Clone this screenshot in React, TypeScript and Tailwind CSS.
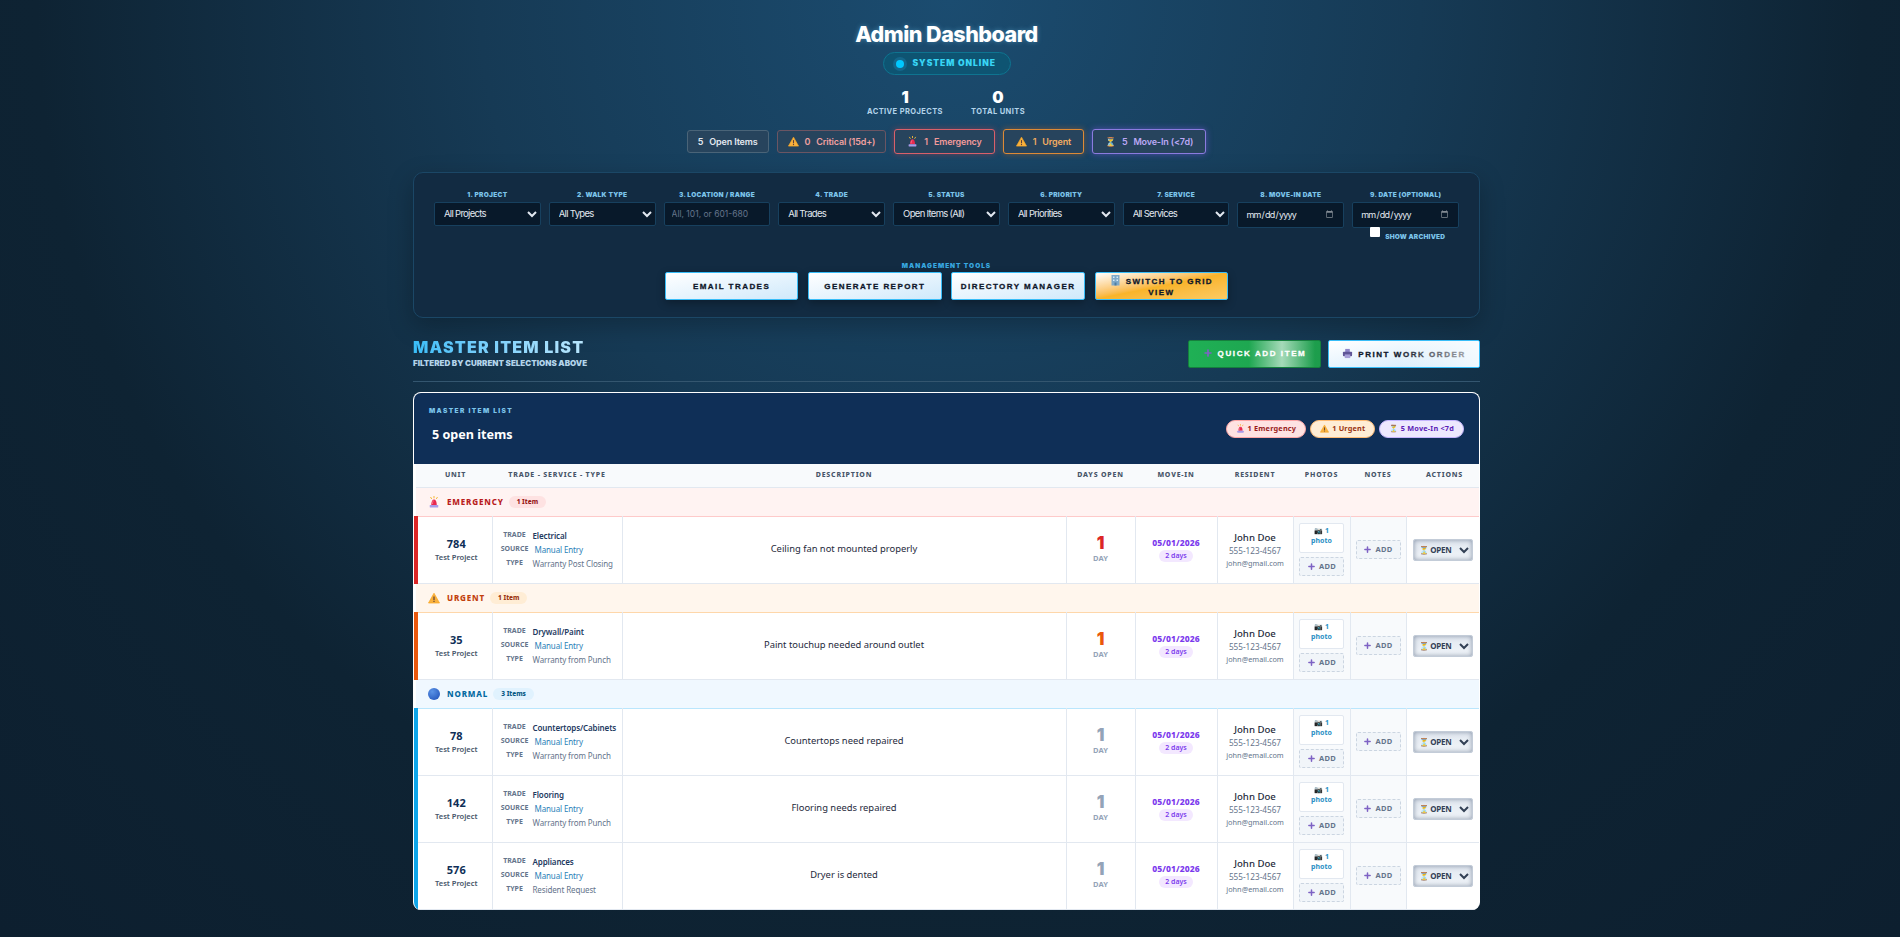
import React from 'react';
import { Plus } from 'lucide-react';

function Siren({ size = 12 }: { size?: number }) {
  return (
    <svg width={size} height={size} viewBox="0 0 24 24" className="inline-block shrink-0 align-[-2px]">
      <path d="M5 2l2.5 4M12 0v4.5M19 2l-2.5 4" stroke="#f5b73a" strokeWidth="2" fill="none" />
      <path d="M6.5 18c0-7 2-11 5.5-11s5.500 4 5.500 11z" fill="#e8294f" />
      <path d="M9 16c0-4 1-6 2.500-7" stroke="#f88aa0" strokeWidth="1.500" fill="none" />
      <rect x="3.500" y="18" width="17" height="5" rx="1" fill="#a89be8" />
    </svg>
  );
}

function Warn({ size = 12 }: { size?: number }) {
  return (
    <svg width={size} height={size} viewBox="0 0 24 24" className="inline-block shrink-0 align-[-2px]">
      <path d="M12 2.500L23 22H1z" fill="#f9b13e" stroke="#f9a825" strokeWidth="1.500" strokeLinejoin="round" />
      <rect x="10.800" y="9" width="2.400" height="7" fill="#5d4037" />
      <rect x="10.800" y="17.500" width="2.400" height="2.400" fill="#5d4037" />
    </svg>
  );
}

function Ball({ size = 12 }: { size?: number }) {
  return <span style={{ width: size, height: size }} className="inline-block shrink-0 rounded-full bg-[radial-gradient(circle_at_35%_30%,#5b93e6,#2f62c4_70%,#2450a8)]" />;
}

function Printer() {
  return (
    <svg width="11" height="11" viewBox="0 0 24 24" className="mr-[5px] inline-block align-[-2px]">
      <rect x="7" y="2" width="10" height="7" fill="#8f86c9" />
      <rect x="2" y="8" width="20" height="10" rx="2" fill="#5f5596" />
      <rect x="6" y="14" width="12" height="8" fill="#a79fd8" />
    </svg>
  );
}

function Building() {
  return (
    <svg width="11" height="12" viewBox="0 0 22 24" className="mr-[5px] inline-block align-[-2px]">
      <rect x="3" y="2" width="16" height="21" fill="#7fa9c9" />
      <rect x="6" y="5" width="3" height="3" fill="#d8ecf8" />
      <rect x="13" y="5" width="3" height="3" fill="#d8ecf8" />
      <rect x="6" y="11" width="3" height="3" fill="#d8ecf8" />
      <rect x="13" y="11" width="3" height="3" fill="#d8ecf8" />
      <rect x="9" y="17" width="4" height="6" fill="#4f7ea3" />
    </svg>
  );
}

const FILTERS = [
  { label: '1. PROJECT', value: 'All Projects' },
  { label: '2. WALK TYPE', value: 'All Types' },
  { label: '3. LOCATION / RANGE', input: 'All, 101, or 601-680' },
  { label: '4. TRADE', value: 'All Trades' },
  { label: '5. STATUS', value: 'Open Items (All)' },
  { label: '6. PRIORITY', value: 'All Priorities' },
  { label: '7. SERVICE', value: 'All Services' },
  { label: '8. MOVE-IN DATE', date: true },
  { label: '9. DATE (OPTIONAL)', date: true, archived: true },
];

const GROUPS = [
  {
    name: 'EMERGENCY',
    icon: <Siren />,
    count: '1 Item',
    bar: 'border-l-[#dc2626]',
    days: 'text-[#dc2626]',
    head: 'bg-[#fff3f2] border-b-[#fecaca]',
    title: 'text-[#b91c1c]',
    pill: 'bg-[#fee2e2] text-[#991b1b]',
    rows: [{ unit: '784', trade: 'Electrical', type: 'Warranty Post Closing', desc: 'Ceiling fan not mounted properly', mail: 'john@gmail.com' }],
  },
  {
    name: 'URGENT',
    icon: <Warn />,
    count: '1 Item',
    bar: 'border-l-[#ea580c]',
    days: 'text-[#ea580c]',
    head: 'bg-[#fff6ed] border-b-[#fed7aa]',
    title: 'text-[#c2410c]',
    pill: 'bg-[#ffedd5] text-[#9a3412]',
    rows: [{ unit: '35', trade: 'Drywall/Paint', type: 'Warranty from Punch', desc: 'Paint touchup needed around outlet', mail: 'john@email.com' }],
  },
  {
    name: 'NORMAL',
    icon: <Ball />,
    count: '3 Items',
    bar: 'border-l-[#0ea5e9]',
    days: 'text-[#94a3b8]',
    head: 'bg-[#f0f8ff] border-b-[#bae6fd]',
    title: 'text-[#0369a1]',
    pill: 'bg-[#e0f2fe] text-[#075985]',
    rows: [
      { unit: '78', trade: 'Countertops/Cabinets', type: 'Warranty from Punch', desc: 'Countertops need repaired', mail: 'john@email.com' },
      { unit: '142', trade: 'Flooring', type: 'Warranty from Punch', desc: 'Flooring needs repaired', mail: 'john@gmail.com' },
      { unit: '576', trade: 'Appliances', type: 'Resident Request', desc: 'Dryer is dented', mail: 'john@email.com' },
    ],
  },
];

const HEADERS = ['UNIT', 'TRADE - SERVICE - TYPE', 'DESCRIPTION', 'DAYS OPEN', 'MOVE-IN', 'RESIDENT', 'PHOTOS', 'NOTES', 'ACTIONS'];
const WIDTHS = ['w-[76px]', 'w-[130px]', 'w-[444px]', 'w-[69px]', 'w-[82px]', 'w-[76px]', 'w-[57px]', 'w-[56px]', 'w-[77px]'];

const sans = "font-['Inter',sans-serif]";
const body = "font-['Noto_Sans','Open_Sans',sans-serif]";
const toolBtn =
  "h-[28px] w-[133.4px] rounded-[2px] border border-[#38bdf8] bg-gradient-to-br from-white to-[#cfe9fb] font-['Liberation_Sans',sans-serif] text-[8px] leading-[11px] font-bold tracking-[1.45px] text-[#0f172a] shadow-[0_3px_8px_rgba(0,0,0,0.3)] [-webkit-text-stroke:0.3px_#0f172a]";

function Badge({ className, children }: { className: string; children: React.ReactNode }) {
  return (
    <div className={`flex items-center gap-[6px] rounded-[3px] border bg-[#27445d] text-[9px] font-semibold tracking-[-0.15px] ${className}`}>
      {children}
    </div>
  );
}

function Filter({ f }: { f: (typeof FILTERS)[number] }) {
  const field = 'w-full rounded-[2px] border border-[#17405e] bg-[#08192a] text-[#e2e8f0]';
  return (
    <div className="relative flex flex-col items-center">
      <label className="mb-[1.5px] text-[6.5px] leading-[9px] font-black tracking-[0.3px] text-[#7cc4ea]">{f.label}</label>
      {f.value && (
        <select className={`${field} h-[24px] pl-[5px] text-[9.5px] tracking-[-0.7px]`} defaultValue={f.value}>
          <option>{f.value}</option>
        </select>
      )}
      {f.input && <input className={`${field} h-[24px] px-[7px] text-[8.5px] placeholder:text-[#64748b]`} placeholder={f.input} />}
      {f.date && (
        <input
          type="date"
          className={`${field} h-[26px] px-[7px] text-[9px] tracking-[-0.8px] [color-scheme:dark] [&::-webkit-calendar-picker-indicator]:h-[9px] [&::-webkit-calendar-picker-indicator]:w-[9px] [&::-webkit-calendar-picker-indicator]:opacity-50`}
        />
      )}
      {f.archived && (
        <label className="absolute top-[35px] left-[18px] mt-[2px] flex items-center gap-[5px] text-[6.5px] font-black tracking-[0.2px] text-[#7cc4ea]">
          <input type="checkbox" className="mt-[-6px] h-[10px] w-[10px] appearance-none rounded-[1px] bg-white" />
          <span className="mt-[5px]">SHOW ARCHIVED</span>
        </label>
      )}
    </div>
  );
}

function AddBtn({ className = '' }: { className?: string }) {
  return (
    <button className={`flex h-[19px] w-[45px] items-center justify-center gap-[3px] rounded-[2px] border border-dashed border-[#cbd5e1] bg-[#f1f5f9] text-[7.5px] font-bold tracking-[0.3px] text-[#64748b] ${className}`}>
      <Plus size={9} strokeWidth={4} className="text-[#7e62c4]" /> ADD
    </button>
  );
}

function Row({ r, g }: { r: (typeof GROUPS)[number]['rows'][number]; g: (typeof GROUPS)[number] }) {
  return (
    <tr className="h-[67px] border-b border-[#e2e8f0] bg-white">
      <td className={`border-r border-l-[4px] border-r-[#e2e8f0] pl-[3px] text-center ${g.bar}`}>
        <div className="text-[11px] leading-[14px] font-bold text-[#0f2f57]">{r.unit}</div>
        <div className="text-[7.5px] leading-[12px] font-semibold text-[#475569]">Test Project</div>
      </td>
      <td className="border-r border-[#e2e8f0] pl-[7px]">
        {[
          ['TRADE', r.trade, 'font-semibold text-[#1e3a5f]'],
          ['SOURCE', 'Manual Entry', 'ml-[5px] text-[#2a7fb8]'],
          ['TYPE', r.type, 'ml-[3px] text-[#64748b]'],
        ].map(([k, v, c]) => (
          <div key={k} className="flex h-[14px] items-center text-[8px] tracking-[-0.12px] whitespace-nowrap">
            <span className="w-[30px] text-center text-[7px] font-bold tracking-[0px] text-[#64748b]">{k}</span>
            <span className={`ml-[3px] ${c}`}>{v}</span>
          </div>
        ))}
      </td>
      <td className="border-r border-[#e2e8f0] text-center text-[9.4px] text-[#1e293b]">{r.desc}</td>
      <td className="border-r border-[#e2e8f0] text-center">
        <div className={`${sans} text-[17px] leading-[18px] font-black ${g.days}`}>1</div>
        <div className="mt-[1px] text-[7.5px] font-bold text-[#94a3b8]">DAY</div>
      </td>
      <td className="border-r border-[#e2e8f0] text-center">
        <div className="text-[8.5px] leading-[12px] font-extrabold tracking-[0.1px] text-[#7c3aed]">05/01/2026</div>
        <div className="mx-auto mt-[1.5px] w-fit rounded-full bg-[#f3e8ff] px-[6px] text-[7px] leading-[12px] font-semibold text-[#7c3aed]">2 days</div>
      </td>
      <td className="border-r border-[#e2e8f0] text-center">
        <div className="text-[9.6px] leading-[13px] font-medium text-[#1e293b]">John Doe</div>
        <div className="text-[8.2px] leading-[13px] text-[#64748b]">555-123-4567</div>
        <div className="text-[7.3px] leading-[12px] text-[#64748b]">{r.mail}</div>
      </td>
      <td className="border-r border-[#e2e8f0] bg-[#f8fafc] text-center">
        <div className="flex flex-col items-center gap-[4px]">
          <div className="h-[30px] w-[45px] rounded-[2px] border border-[#e2e8f0] bg-white pt-[2px] text-[7px] leading-[10px] font-bold text-[#2a8fc4]">
            📷 1<br />photo
          </div>
          <AddBtn />
        </div>
      </td>
      <td className="border-r border-[#e2e8f0] bg-[#f8fafc]">
        <AddBtn className="mx-auto" />
      </td>
      <td className="text-center">
        <select
          className="ml-[6px] block h-[22px] w-[60px] rounded-[2px] border border-[#c3ccd8] bg-gradient-to-b from-[#e2e8f0] to-[#f1f5f9] pl-[1px] text-[8px] font-bold tracking-[-0.2px] text-[#334155] shadow-[inset_0_0_5px_rgba(100,116,139,0.7)]"
          defaultValue="⏳ OPEN"
        >
          <option>⏳ OPEN</option>
        </select>
      </td>
    </tr>
  );
}

export default function App() {
  return (
    <div className={`${sans} min-h-[937px] bg-[radial-gradient(ellipse_at_top,#1b4c70_0%,#163a55_35%,#0e2333_68%,#0d1f2f_100%)] pr-[7px] pb-[28px]`}>
      <header className="flex flex-col items-center pt-[21px]">
        <h1 className="text-[21.5px] leading-[26px] font-extrabold tracking-[-0.5px] text-white [text-shadow:0_0_5px_rgba(125,211,252,0.4)]">Admin Dashboard</h1>
        <div className="mt-[5px] flex h-[23px] w-[128px] items-center gap-[6px] rounded-full border border-[#0e7490] bg-[#0e5472] pl-[9px] text-[8.5px] font-black tracking-[0.95px] text-[#38d5f5]">
          <span className="flex h-[14px] w-[14px] items-center justify-center rounded-full bg-[#14668a]">
            <span className="h-[8px] w-[8px] rounded-full bg-[#00c8ff]" />
          </span>
          SYSTEM ONLINE
        </div>
        <div className="mt-[12px] flex gap-[25px] text-center">
          <div className="w-[78px]">
            <div className="text-[16px] leading-[20px] font-black text-white">1</div>
            <div className="text-[7.5px] leading-[10px] font-bold tracking-[0.4px] whitespace-nowrap text-[#b3d4ea]">ACTIVE PROJECTS</div>
          </div>
          <div className="w-[58px]">
            <div className="text-[16px] leading-[20px] font-black text-white">0</div>
            <div className="text-[7.5px] leading-[10px] font-bold tracking-[0.4px] whitespace-nowrap text-[#b3d4ea]">TOTAL UNITS</div>
          </div>
        </div>
        <div className="mt-[12px] flex items-center gap-[8px]">
          <Badge className="h-[23px] border-[#4a6478] px-[10px] text-[#e2e8f0]">
            <span>5</span>
            <span>Open Items</span>
          </Badge>
          <Badge className="h-[23px] border-[#6b5563] px-[10px] text-[#f0a0a0]">
            <Warn size={11} />
            <span>0</span>
            <span>Critical (15d+)</span>
          </Badge>
          <Badge className="h-[25px] border-[#d9606a] px-[12px] text-[#f19a9a] shadow-[0_0_6px_rgba(239,68,68,0.4)]">
            <Siren size={11} />
            <span>1</span>
            <span>Emergency</span>
          </Badge>
          <Badge className="h-[25px] border-[#dd8a36] px-[12px] text-[#f2ad62] shadow-[0_0_6px_rgba(249,115,22,0.4)]">
            <Warn size={11} />
            <span>1</span>
            <span>Urgent</span>
          </Badge>
          <Badge className="h-[25px] border-[#8b7bdf] px-[12px] text-[#bba8f5] shadow-[0_0_6px_rgba(139,92,246,0.5)]">
            <span className="text-[9px]">⏳</span>
            <span>5</span>
            <span>Move-In (&lt;7d)</span>
          </Badge>
        </div>
      </header>

      <main className="mx-auto w-[1067px]">
        <section className="mt-[18px] h-[146px] rounded-[10px] border border-[#1b4766] bg-[#122b42] px-[20px] pt-[18px] shadow-[0_8px_24px_rgba(0,0,0,0.25)]">
          <div className="grid grid-cols-9 gap-[8px]">
            {FILTERS.map((f) => (
              <Filter key={f.label} f={f} />
            ))}
          </div>
          <div className="mt-[34.5px] text-center text-[6.5px] leading-[9px] font-black tracking-[1px] text-[#38a8e0]">MANAGEMENT TOOLS</div>
          <div className="mt-[1px] flex justify-center gap-[9.9px]">
            <button className={toolBtn}>EMAIL TRADES</button>
            <button className={toolBtn}>GENERATE REPORT</button>
            <button className={toolBtn}>DIRECTORY MANAGER</button>
            <button className={`${toolBtn} from-[#fde68a] via-[#f9b429] to-[#fbcb62]`}>
              <Building />SWITCH TO GRID VIEW
            </button>
          </div>
        </section>

        <section className="mt-[22px] flex items-start justify-between border-b border-[#34566f] pb-[12px]">
          <div>
            <h2 className="mt-[-3px] bg-gradient-to-r from-[#38bdf8] to-[#bae6fd] bg-clip-text text-[16px] leading-[20px] font-black tracking-[1.2px] text-transparent">MASTER ITEM LIST</h2>
            <p className="mt-[1px] text-[8px] leading-[11px] font-black text-[#b3d4ea]">FILTERED BY CURRENT SELECTIONS ABOVE</p>
          </div>
          <div className="flex gap-[7px]">
            <button className="relative h-[28px] w-[133px] overflow-hidden rounded-[2px] border border-[#15803d] bg-gradient-to-r from-[#1fb055] to-[#1d9d4c] font-['Liberation_Sans',sans-serif] text-[8px] font-bold tracking-[1.6px] text-white [-webkit-text-stroke:0.3px_white]">
              <Plus size={10} strokeWidth={4} className="mr-[5px] inline-block align-[-2px] text-[#7e62c4]" />QUICK ADD ITEM
              <span className="absolute inset-y-0 left-[46%] w-[50%] bg-gradient-to-r from-transparent via-white/60 to-transparent" />
            </button>
            <button className="relative h-[28px] w-[152px] overflow-hidden rounded-[2px] border border-[#38bdf8] bg-gradient-to-br from-white to-[#cfe9fb] font-['Liberation_Sans',sans-serif] text-[8px] font-bold tracking-[1.55px] text-[#0f172a] [-webkit-text-stroke:0.3px_#0f172a]">
              <Printer />PRINT WORK ORDER
              <span className="absolute inset-y-0 right-0 w-[55%] bg-gradient-to-r from-transparent to-white/70" />
            </button>
          </div>
        </section>

        <section className={`${body} mt-[10px] overflow-hidden rounded-[8px] border-t border-r border-l border-white bg-white`}>
          <div className="flex h-[71px] items-center justify-between bg-[#0f2f57] pr-[15px] pl-[15px]">
            <div className="mb-[8px]">
              <div className={`${sans} text-[6.5px] font-black tracking-[1.4px] text-[#7cc4ea]`}>MASTER ITEM LIST</div>
              <div className="mt-[12px] pl-[3px] text-[12.6px] leading-[14px] font-bold text-white">5 open items</div>
            </div>
            <div className="flex gap-[4px] text-[7.3px] font-bold tracking-[0.2px]">
              <span className="flex h-[18px] items-center gap-[3px] rounded-full border border-[#fca5a5] bg-[#fee2e2] px-[9px] text-[#991b1b]">
                <Siren size={9} /> 1 Emergency
              </span>
              <span className="flex h-[18px] items-center gap-[3px] rounded-full border border-[#fdba74] bg-[#ffedd5] px-[9px] text-[#9a3412]">
                <Warn size={9} /> 1 Urgent
              </span>
              <span className="flex h-[18px] items-center gap-[3px] rounded-full border border-[#c4b5fd] bg-[#ede9fe] px-[9px] text-[#5b21b6]">⏳ 5 Move-In &lt;7d</span>
            </div>
          </div>
          <table className="w-full table-fixed border-collapse">
            <colgroup>
              {WIDTHS.map((w, i) => (
                <col key={i} className={w} />
              ))}
            </colgroup>
            <thead>
              <tr className="h-[23px] border-b border-[#e2e8f0] bg-[#f8fafc]">
                {HEADERS.map((h, i) => (
                  <th key={h} className={`text-center text-[7px] font-extrabold tracking-[0.8px] text-[#475569] ${i === 0 ? 'pl-[3px]' : ''}`}>
                    {h}
                  </th>
                ))}
              </tr>
            </thead>
            <tbody>
              {GROUPS.map((g) => (
                <React.Fragment key={g.name}>
                  <tr className={`h-[29px] border-b ${g.head}`}>
                    <td colSpan={9} className="pl-[12px]">
                      <div className="flex items-center">
                        <span className="flex w-[19px] items-center">{g.icon}</span>
                        <span className={`text-[8px] font-extrabold tracking-[0.85px] ${g.title}`}>{g.name}</span>
                        <span className={`ml-[5px] rounded-full px-[8px] text-[6.5px] leading-[12px] font-extrabold ${g.pill}`}>{g.count}</span>
                      </div>
                    </td>
                  </tr>
                  {g.rows.map((r) => (
                    <Row key={r.unit} r={r} g={g} />
                  ))}
                </React.Fragment>
              ))}
            </tbody>
          </table>
        </section>
      </main>
    </div>
  );
}
